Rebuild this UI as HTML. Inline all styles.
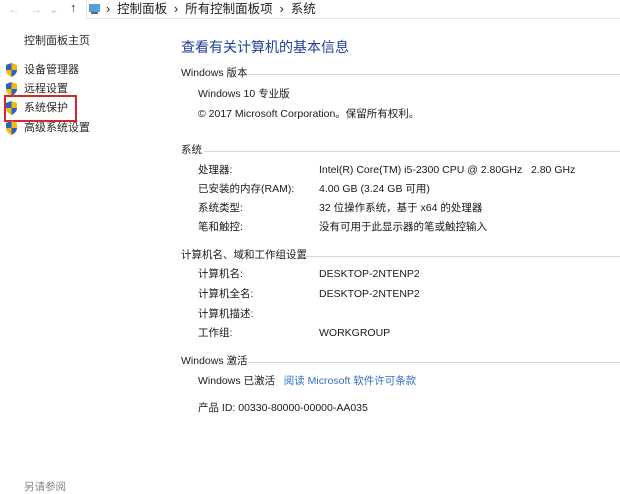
<!DOCTYPE html>
<html><head><meta charset="utf-8"><style>
body{margin:0;width:620px;height:487px;background:#fff;position:relative;overflow:hidden;font-family:"Liberation Sans","Noto Sans CJK SC",sans-serif;font-size:10.5px;color:#1a1a1a}
.a{position:absolute;white-space:nowrap;line-height:14px}
.hl{position:absolute;height:1px;background:#d8d8d8;right:0}
.sh{position:absolute;width:13px;height:14px}
.lk{color:#2a2a2a;font-size:11px}
</style></head><body>
<div style="position:absolute;left:86px;top:0;right:0;height:18px;border-bottom:1px solid #e3e3e3;border-left:1px solid #e3e3e3"></div>
<div class="a" style="left:8px;top:2px;color:#c8c8c8;font-size:12px">←&nbsp;&nbsp;&nbsp;→&nbsp;&nbsp;⌄</div>
<div class="a" style="left:70px;top:1px;font-size:13px;color:#333">↑</div>
<svg style="position:absolute;left:88px;top:3px" width="14" height="12"><rect x="1" y="1" width="11" height="8" fill="#5aa0d8"/><rect x="3" y="9" width="7" height="2" fill="#666"/></svg>
<div class="a" style="left:106px;top:2px;font-size:12.5px;color:#222">›&nbsp;&nbsp;控制面板&nbsp;&nbsp;›&nbsp;&nbsp;所有控制面板项&nbsp;&nbsp;›&nbsp;&nbsp;系统</div>

<div class="a lk" style="left:24px;top:34px">控制面板主页</div>
<svg class="sh" style="left:5px;top:63px" viewBox="0 0 13 14"><path d="M6.5 0L12 2v5c0 3-2.5 5.5-5.5 7C3.5 12.5 1 10 1 7V2z" fill="#f2b90c"/><path d="M6.5 0V7H1V2zM6.5 7H12c0 3-2.5 5.5-5.5 7z" fill="#2a62c4"/></svg>
<div class="a lk" style="left:24px;top:63px">设备管理器</div>
<svg class="sh" style="left:5px;top:82px" viewBox="0 0 13 14"><path d="M6.5 0L12 2v5c0 3-2.5 5.5-5.5 7C3.5 12.5 1 10 1 7V2z" fill="#f2b90c"/><path d="M6.5 0V7H1V2zM6.5 7H12c0 3-2.5 5.5-5.5 7z" fill="#2a62c4"/></svg>
<div class="a lk" style="left:24px;top:82px">远程设置</div>
<svg class="sh" style="left:5px;top:101px" viewBox="0 0 13 14"><path d="M6.5 0L12 2v5c0 3-2.5 5.5-5.5 7C3.5 12.5 1 10 1 7V2z" fill="#f2b90c"/><path d="M6.5 0V7H1V2zM6.5 7H12c0 3-2.5 5.5-5.5 7z" fill="#2a62c4"/></svg>
<div class="a lk" style="left:24px;top:101px">系统保护</div>
<div style="position:absolute;left:4px;top:95px;width:69px;height:23px;border:2px solid #d9252b"></div>
<svg class="sh" style="left:5px;top:121px" viewBox="0 0 13 14"><path d="M6.5 0L12 2v5c0 3-2.5 5.5-5.5 7C3.5 12.5 1 10 1 7V2z" fill="#f2b90c"/><path d="M6.5 0V7H1V2zM6.5 7H12c0 3-2.5 5.5-5.5 7z" fill="#2a62c4"/></svg>
<div class="a lk" style="left:24px;top:121px">高级系统设置</div>

<div class="a" style="left:181px;top:38px;font-size:14px;line-height:18px;color:#1e3f9e">查看有关计算机的基本信息</div>

<div class="a" style="left:181px;top:66px">Windows 版本</div><div class="hl" style="left:248px;top:74px"></div>
<div class="a" style="left:198px;top:87px">Windows 10 专业版</div>
<div class="a" style="left:198px;top:107px">© 2017 Microsoft Corporation。保留所有权利。</div>

<div class="a" style="left:181px;top:143px">系统</div><div class="hl" style="left:204px;top:151px"></div>
<div class="a" style="left:198px;top:163px">处理器:</div><div class="a" style="left:319px;top:163px">Intel(R) Core(TM) i5-2300 CPU @ 2.80GHz&nbsp;&nbsp; 2.80 GHz</div>
<div class="a" style="left:198px;top:182px">已安装的内存(RAM):</div><div class="a" style="left:319px;top:182px">4.00 GB (3.24 GB 可用)</div>
<div class="a" style="left:198px;top:201px">系统类型:</div><div class="a" style="left:319px;top:201px">32 位操作系统，基于 x64 的处理器</div>
<div class="a" style="left:198px;top:220px">笔和触控:</div><div class="a" style="left:319px;top:220px">没有可用于此显示器的笔或触控输入</div>

<div class="a" style="left:181px;top:248px">计算机名、域和工作组设置</div><div class="hl" style="left:302px;top:256px"></div>
<div class="a" style="left:198px;top:267px">计算机名:</div><div class="a" style="left:319px;top:267px">DESKTOP-2NTENP2</div>
<div class="a" style="left:198px;top:287px">计算机全名:</div><div class="a" style="left:319px;top:287px">DESKTOP-2NTENP2</div>
<div class="a" style="left:198px;top:307px">计算机描述:</div>
<div class="a" style="left:198px;top:326px">工作组:</div><div class="a" style="left:319px;top:326px">WORKGROUP</div>

<div class="a" style="left:181px;top:354px">Windows 激活</div><div class="hl" style="left:248px;top:362px"></div>
<div class="a" style="left:198px;top:374px">Windows 已激活&nbsp;&nbsp; <span style="color:#2f6fc4">阅读 Microsoft 软件许可条款</span></div>
<div class="a" style="left:198px;top:401px">产品 ID: 00330-80000-00000-AA035</div>

<div class="a" style="left:24px;top:480px;color:#888">另请参阅</div>
</body></html>
